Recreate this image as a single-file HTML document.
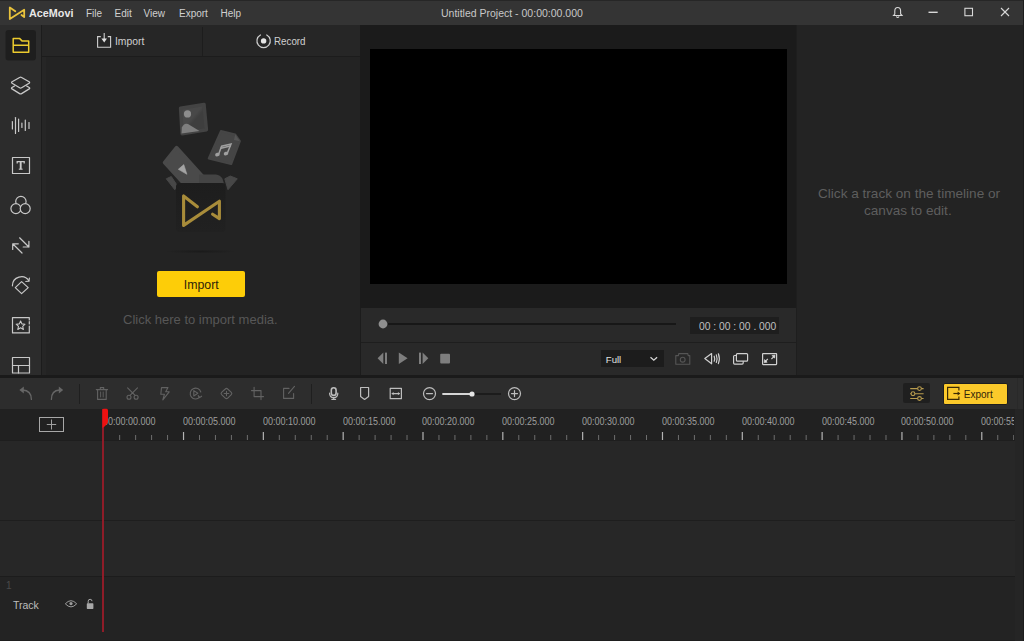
<!DOCTYPE html>
<html><head><meta charset="utf-8">
<style>
*{margin:0;padding:0;box-sizing:border-box}
html,body{width:1024px;height:641px;overflow:hidden;background:#1c1c1c;font-family:"Liberation Sans",sans-serif;color:#ddd}
.a{position:absolute}
svg{position:absolute;overflow:visible}
.t{position:absolute;white-space:nowrap;line-height:1}
</style></head><body>
<!-- title bar -->
<div class="a" style="left:0;top:0;width:1024px;height:25px;background:#343434;border-top:1px solid #262626"></div>
<!-- sidebar -->
<div class="a" style="left:0;top:25px;width:41px;height:351px;background:#2c2c2c"></div>
<div class="a" style="left:40.5px;top:25px;width:1.2px;height:351px;background:#1c1c1c"></div>
<!-- left panel -->
<div class="a" style="left:41.7px;top:25px;width:318.3px;height:351px;background:#232323"></div>
<div class="a" style="left:41.7px;top:25px;width:4.3px;height:351px;background:#262626"></div>
<div class="a" style="left:41.7px;top:25px;width:318.3px;height:32px;background:#262626;border-bottom:1px solid #1c1c1c"></div>
<div class="a" style="left:202px;top:27px;width:1px;height:29px;background:#1d1d1d"></div>
<!-- preview -->
<div class="a" style="left:360px;top:25px;width:436px;height:283px;background:#1b1b1b"></div>
<div class="a" style="left:370px;top:49px;width:417px;height:235px;background:#000"></div>
<!-- controls -->
<div class="a" style="left:360px;top:308px;width:436px;height:68px;background:#292929;border-left:1.3px solid #1c1c1c"></div>
<div class="a" style="left:361px;top:342px;width:435px;height:1px;background:#1e1e1e"></div>
<!-- right panel -->
<div class="a" style="left:796px;top:25px;width:1px;height:352px;background:#1e1e1e"></div>
<div class="a" style="left:797px;top:25px;width:227px;height:352px;background:#232323"></div>
<!-- separator line -->
<div class="a" style="left:0;top:375.3px;width:1024px;height:2.3px;background:#1a1a1a"></div>
<!-- toolbar -->
<div class="a" style="left:0;top:377.6px;width:1024px;height:31px;background:#2d2d2d"></div>
<!-- ruler -->
<div class="a" style="left:0;top:408.8px;width:1024px;height:31.2px;background:#212121"></div>
<!-- tracks -->
<div class="a" style="left:0;top:440px;width:1024px;height:201px;background:#272727;border-top:1px solid #1e1e1e"></div>
<div class="a" style="left:0;top:520px;width:1024px;height:1px;background:#1e1e1e"></div>
<div class="a" style="left:0;top:576px;width:1024px;height:65px;background:#232323;border-top:1px solid #1c1c1c"></div>
<div class="a" style="left:0;top:640px;width:1024px;height:1px;background:#1e1e1e"></div>

<!-- title text -->
<div class="t" style="left:29px;top:8px;font-size:10.8px;font-weight:bold;color:#e8e8e8">AceMovi</div>

<div class="t" style="left:86px;top:9px;font-size:10px;color:#d0d0d0">File</div>
<div class="t" style="left:114.5px;top:9px;font-size:10px;color:#d0d0d0">Edit</div>
<div class="t" style="left:143.5px;top:9px;font-size:10px;color:#d0d0d0">View</div>
<div class="t" style="left:179px;top:9px;font-size:10px;color:#d0d0d0">Export</div>
<div class="t" style="left:220.5px;top:9px;font-size:10px;color:#d0d0d0">Help</div>
<div class="t" style="left:441px;top:8px;font-size:10.5px;color:#c8c8c8">Untitled Project - 00:00:00.000</div>

<!-- header texts -->
<div class="t" style="left:114.5px;top:36px;font-size:11px;color:#d0d0d0;transform:scaleX(0.94);transform-origin:0 0">Import</div>
<div class="t" style="left:273.8px;top:36px;font-size:11px;color:#d0d0d0;transform:scaleX(0.89);transform-origin:0 0">Record</div>

<!-- import button -->
<div class="a" style="left:157px;top:271px;width:88px;height:26px;background:#fdcd08;border-radius:2px"></div>
<div class="t" style="left:183.8px;top:279px;font-size:12.3px;color:#2e2408">Import</div>
<div class="t" style="left:123px;top:313px;font-size:13px;color:#575757">Click here to import media.</div>

<!-- right panel text -->
<div class="t" style="left:818px;top:187px;font-size:13.6px;color:#5e5e5e">Click a track on the timeline or</div>
<div class="t" style="left:864px;top:204px;font-size:13.6px;color:#5e5e5e">canvas to edit.</div>

<!-- timecode -->
<div class="a" style="left:690px;top:317px;width:89px;height:17px;background:#1e1e1e"></div>
<div class="t" style="left:699px;top:321.7px;font-size:10.3px;color:#c0c0c0">00 : 00 : 00 . 000</div>
<!-- full dropdown -->
<div class="a" style="left:601px;top:350px;width:63px;height:17px;background:#1c1c1c"></div>
<div class="t" style="left:605.8px;top:355px;font-size:9.6px;color:#e0e0e0">Full</div>

<!-- export -->
<div class="a" style="left:903px;top:383px;width:27px;height:20px;background:#1f1f1f;border-radius:2px"></div>
<div class="a" style="left:942.5px;top:382.5px;width:65px;height:22px;background:#fbc92a;border-radius:2px;border:0.8px solid #1e1e1e"></div>
<div class="t" style="left:963.8px;top:390px;font-size:10px;color:#30250a">Export</div>

<!-- track header -->
<div class="t" style="left:6px;top:581px;font-size:10px;color:#4a4a4a">1</div>
<div class="t" style="left:13px;top:600px;font-size:10.5px;color:#bdbdbd">Track</div>


<svg width="1024" height="641" viewBox="0 0 1024 641" style="left:0;top:0" fill="none">
<!-- title logo -->
<polyline points="15.3,11.3 9.8,7.4 9.8,19.1 24.2,9.7 24.2,17 21.5,15" stroke="#e8c23c" stroke-width="1.8" stroke-linejoin="round" stroke-linecap="round"/>
<!-- window controls -->
<g stroke="#d8d8d8" stroke-width="1.1">
<path d="M893.5,15.5 L894.8,14 L894.8,11 Q894.8,7.5 897.7,7.5 Q900.6,7.5 900.6,11 L900.6,14 L902,15.5 Z" />
<path d="M896.3,16.5 Q897.7,18.5 899.1,16.5"/>
<line x1="928.5" y1="12.3" x2="937.7" y2="12.3" stroke-width="1.4"/>
<rect x="964.9" y="8.3" width="7.6" height="7.4"/>
<line x1="1001" y1="8" x2="1009" y2="16"/><line x1="1009" y1="8" x2="1001" y2="16"/>
</g>
<!-- sidebar active -->
<rect x="5.5" y="30" width="30.5" height="30.5" rx="3" fill="#1e1e1e"/>
<path d="M13.2,38.4 L19.5,38.4 L22,40.9 L28.7,40.9 L28.7,52.2 L13.2,52.2 Z M13.2,45.3 L28.7,45.3" stroke="#eccb2e" stroke-width="1.5" stroke-linejoin="round"/>
<g stroke="#c8c8c8" stroke-width="1.2" stroke-linejoin="round" stroke-linecap="round">
<!-- layers -->
<path d="M14.5,86 L12,87.5 Q11,88.2 12,88.9 L19.6,93.6 Q20.6,94.2 21.6,93.6 L29.2,88.9 Q30.2,88.2 29.2,87.5 L26.7,86" stroke-width="1.3"/>
<path d="M19.6,77.5 Q20.6,76.9 21.6,77.5 L29.1,81.8 Q30.1,82.5 29.1,83.2 L21.6,87.8 Q20.6,88.4 19.6,87.8 L12.1,83.2 Q11.1,82.5 12.1,81.8 Z" fill="#2c2c2c" stroke-width="1.3"/>
<!-- audio -->
<line x1="12.4" y1="121.5" x2="12.4" y2="129"/>
<line x1="15.5" y1="117.5" x2="15.5" y2="133.5"/>
<line x1="18.6" y1="119" x2="18.6" y2="131.5"/>
<line x1="21.9" y1="123" x2="21.9" y2="127.5"/>
<line x1="25.3" y1="120" x2="25.3" y2="130.5"/>
<line x1="29" y1="122.5" x2="29" y2="128.5"/>
<!-- T box -->
<rect x="12.5" y="157.5" width="17" height="16"/>
<path d="M17.2,163.6 L17.2,161.7 L24.2,161.7 L24.2,163.6" stroke-width="1.3" stroke-linecap="butt" stroke-linejoin="miter"/>
<path d="M20.7,161.7 L20.7,169" stroke-width="1.9" stroke-linecap="butt"/>
<path d="M18.8,169.2 L22.6,169.2" stroke-width="1.1" stroke-linecap="butt"/>
<!-- circles -->
<circle cx="20.9" cy="201.6" r="5.2"/>
<circle cx="15.9" cy="208.6" r="5" fill="#2c2c2c"/>
<circle cx="25.2" cy="208.6" r="5" fill="#2c2c2c"/>
<!-- transition arrows -->
<path d="M19.6,237.8 L28.9,247 M23.2,247 L28.9,247 L28.9,241.3"/>
<path d="M22,253 L12.7,243.8 M18.3,243.8 L12.7,243.8 L12.7,249.4"/>
<!-- rotate -->
<path d="M21.6,281.6 L28.2,287.6 L21.6,293.6 L15.3,287.6 Z"/>
<path d="M12.4,285.8 A9,9 0 0 1 29,281"/>
<path d="M29.4,278.2 L28.9,281.1 L25.8,281.5"/>
<!-- star box -->
<path d="M29.3,320 L29.3,317.6 L12.5,317.6 L12.5,332.9 L29.3,332.9 L29.3,326 M29.3,321.7 L29.3,324"/>
<path d="M20.6,321 L21.9,323.9 L25,324.2 L22.7,326.3 L23.4,329.4 L20.6,327.8 L17.8,329.4 L18.5,326.3 L16.2,324.2 L19.3,323.9 Z" stroke-width="1.1"/>
<!-- layout -->
<rect x="12.5" y="357.5" width="17" height="15.5"/>
<path d="M12.5,365.5 L29.5,365.5 M18.5,365.5 L18.5,373"/>
</g>
</svg>

<svg width="1024" height="641" viewBox="0 0 1024 641" style="left:0;top:0" fill="none">
<!-- header icons -->
<g stroke="#cfcfcf" stroke-width="1.1">
<path d="M100.8,36.6 L97.6,36.6 L97.6,47.3 L110.6,47.3 L110.6,36.6 L107.8,36.6"/>
<path d="M104.2,33 L104.2,40"/>
</g>
<path d="M101.4,38.6 L104.2,42.4 L107,38.6 Z" fill="#e0e0e0"/>
<path d="M266.75,34.98 A6.7,6.7 0 1 1 260.45,34.98" stroke="#cfcfcf" stroke-width="1.2" stroke-linecap="round"/>
<circle cx="263.6" cy="40.9" r="2.7" fill="#e6e6e6"/>
<!-- illustration -->
<defs><radialGradient id="sh" cx="0.5" cy="0.5" r="0.5"><stop offset="0" stop-color="#161616" stop-opacity="0.9"/><stop offset="1" stop-color="#161616" stop-opacity="0"/></radialGradient></defs>
<ellipse cx="201" cy="251.5" rx="36" ry="2" fill="url(#sh)" opacity="0.7"/>
<!-- image card -->
<defs><linearGradient id="ic" x1="0" y1="0" x2="1" y2="1"><stop offset="0.45" stop-color="#484848"/><stop offset="0.55" stop-color="#3e3e3e"/></linearGradient></defs><path d="M180.6,108.3 L204,104.4 L206.4,129.7 L182.1,133.8 Z" fill="url(#ic)" stroke="#434343" stroke-width="3.5" stroke-linejoin="round"/>
<circle cx="187.5" cy="113.9" r="3.6" fill="#8c8c8c"/>
<path d="M181.5,133.5 L181.8,127.5 Q184,122.5 188,124 L199.5,131 Z" fill="#7e7e7e"/>
<!-- music card -->
<path d="M221,131.1 L235.2,134.6 L239.8,141.2 L231.1,164 L208.8,158.5 Z" fill="#454545" stroke="#454545" stroke-width="2.2" stroke-linejoin="round"/>
<path d="M235.2,134.6 L239.8,141.2 L234,140 Z" fill="#555"/>
<g stroke="#a0a0a0" stroke-width="1.5" fill="none" stroke-linecap="round">
<path d="M218.8,153.8 L221.6,146.2 L231,144 L227.4,153"/>
<path d="M221,148.2 L230.2,146"/>
</g>
<ellipse cx="217.4" cy="154.6" rx="2.3" ry="1.8" fill="#a0a0a0" transform="rotate(-15 217.4 154.6)"/>
<ellipse cx="226" cy="153.6" rx="2.3" ry="1.8" fill="#a0a0a0" transform="rotate(-15 226 153.6)"/>
<!-- video card -->
<path d="M164.5,162.5 L176.5,147.5 L209,183.4 L183.5,183.4 Z" fill="#4a4a4a" stroke="#4a4a4a" stroke-width="3.5" stroke-linejoin="round"/>
<path d="M178.3,169.3 L183.8,164.6 L186.9,174.3 Z" fill="#a4a4a4" stroke="#a4a4a4" stroke-width="0.6" stroke-linejoin="round"/>
<!-- lid / flaps -->
<path d="M199,174.5 L216,174.5 Q220,175 222.5,178.7 L224,183.5 L199,183.5 Z" fill="#444"/>
<path d="M166.3,178.8 L171.3,176.5 L177.5,186 L174.8,189.7 Z" fill="#474747" stroke="#474747" stroke-width="1" stroke-linejoin="round"/>
<path d="M224.8,178.8 L230.3,176 L237.3,178.8 L228,189.7 Z" fill="#474747" stroke="#474747" stroke-width="1" stroke-linejoin="round"/>
<!-- box body -->
<defs><linearGradient id="bx" x1="0" y1="0" x2="0" y2="1"><stop offset="0" stop-color="#1d1d1d"/><stop offset="1" stop-color="#212121"/></linearGradient></defs><rect x="176" y="183" width="49.5" height="49" rx="3.5" fill="url(#bx)"/>
<polyline points="197.4,206.8 183.6,196 183.6,225.4 219.4,201.2 219.4,218.6 212.6,214.2" stroke="#a88c3a" stroke-width="3.1" stroke-linejoin="round" stroke-linecap="round"/>
<!-- scrub -->
<line x1="388" y1="324" x2="676" y2="324" stroke="#171717" stroke-width="2.2"/>
<circle cx="383" cy="324" r="4.4" fill="#8e8e8e"/>
<!-- playback -->
<g fill="#7e7e7e">
<path d="M377.6,358.3 L383.3,352.6 L383.3,364 Z"/><rect x="385" y="352.6" width="2" height="11.4"/>
<path d="M398.8,352.6 L407.6,358.3 L398.8,364 Z"/>
<rect x="419" y="352.6" width="2" height="11.4"/><path d="M422.6,352.6 L428.3,358.3 L422.6,364 Z"/>
<rect x="440.2" y="353.8" width="9.8" height="9.6" rx="1"/>
</g>
<!-- dropdown chevron -->
<path d="M650.5,357.2 L653.8,360.3 L657.1,357.2" stroke="#d8d8d8" stroke-width="1.2"/>
<!-- camera -->
<g stroke="#555" stroke-width="1.1" stroke-linejoin="round">
<path d="M675.8,355.6 L678.4,355.6 L678.8,353.6 L687.8,353.6 L688.2,355.6 L689.8,355.6 L689.8,364.2 L675.8,364.2 Z"/>
<circle cx="682.7" cy="359.7" r="2.4"/>
</g>
<!-- speaker -->
<g stroke="#d0d0d0" stroke-width="1.2" stroke-linejoin="round" stroke-linecap="round">
<path d="M704.8,358.6 L711.6,353.6 L711.6,363.8 Z"/>
<path d="M714.2,356.2 Q715.2,358.7 714.2,361.2"/>
<path d="M716.3,354.9 Q717.8,358.7 716.3,362.5"/>
<path d="M718.4,353.8 Q720.3,358.7 718.4,363.6"/>
</g>
<!-- pip -->
<g stroke="#d0d0d0" stroke-width="1.2">
<rect x="733.6" y="355.5" width="9.6" height="8.6" rx="1"/>
<rect x="736.4" y="353.6" width="11.2" height="7.6" rx="1" fill="#292929"/>
</g>
<!-- fullscreen -->
<g stroke="#d0d0d0" stroke-width="1.2">
<rect x="762.6" y="353.6" width="14" height="11" rx="0.5"/>
<path d="M767.8,359 L765.6,361.2 M771.4,359 L773.6,356.8" stroke-width="1.1"/>
</g>
<path d="M764.2,362.6 L764.6,359.6 L767.2,362.2 Z M775,355.2 L774.6,358.2 L772,355.6 Z" fill="#e0e0e0" stroke="#e0e0e0" stroke-width="0.6" stroke-linejoin="round"/>
</svg>

<svg width="1024" height="641" viewBox="0 0 1024 641" style="left:0;top:0" fill="none">
<!-- toolbar disabled icons -->
<g stroke="#666" stroke-width="1.3" stroke-linecap="round" stroke-linejoin="round">
<path d="M22.5,390 Q31.4,390.5 31.4,399.4"/>
<path d="M59.5,390 Q51.4,390.5 51.4,399.4"/>
</g>
<path d="M19.4,390 L23.8,386.6 L23.8,393.4 Z" fill="#666"/>
<path d="M63.2,390 L58.8,386.6 L58.8,393.4 Z" fill="#666"/>
<line x1="79.5" y1="384" x2="79.5" y2="404" stroke="#1f1f1f" stroke-width="1"/>
<line x1="311.5" y1="384" x2="311.5" y2="404" stroke="#1f1f1f" stroke-width="1"/>
<g stroke="#626262" stroke-width="1.1" stroke-linejoin="round" stroke-linecap="round">
<!-- trash -->
<path d="M96.3,389.6 L107.6,389.6 M100.3,389.4 L100.3,387.6 L103.7,387.6 L103.7,389.4"/>
<path d="M97.6,389.8 L97.6,399.4 L106.2,399.4 L106.2,389.8"/>
<path d="M100.6,392 L100.6,397 M103.2,392 L103.2,397" stroke-width="0.9"/>
<!-- scissors -->
<circle cx="129" cy="397.2" r="2"/><circle cx="136.1" cy="397.2" r="2"/>
<path d="M130,395.3 L137.5,387.8 M135.1,395.3 L127.6,387.8"/>
<!-- lightning -->
<path d="M161.5,387.6 L168,387.6 L165.7,391.8 L169.2,391.8 L162.8,399.8 L164.4,394.3 L160.8,394.3 Z"/>
<!-- speed -->
<path d="M199.6,397.2 A5.4,5.4 0 1 1 200.8,392"/>
<path d="M201.6,396.2 L199.6,397.6 L198.2,395.6"/>
<path d="M193.8,390.6 L197.8,393.3 L193.8,396 Z"/>
<!-- keyframe -->
<path d="M225.3,389 Q226.5,387.8 227.7,389 L231.3,392.4 Q232.4,393.5 231.3,394.6 L227.7,398.1 Q226.5,399.3 225.3,398.1 L221.6,394.6 Q220.5,393.5 221.6,392.4 Z"/>
<path d="M226.5,391.2 L226.5,395.8 M224.2,393.5 L228.8,393.5"/>
<!-- crop -->
<path d="M254.1,387.2 L254.1,396.6 L263.5,396.6 M251.5,390.6 L261,390.6 L261,399.6"/>
<!-- edit -->
<path d="M289,388.4 L283.6,388.4 L283.6,398.4 L293.6,398.4 L293.6,393.5"/>
<path d="M288.5,393.4 L294.5,386.4"/>
</g>
<!-- enabled icons -->
<g stroke="#bdbdbd" stroke-width="1.2" stroke-linejoin="round" stroke-linecap="round">
<rect x="331.3" y="387.8" width="4.8" height="7.6" rx="2.4" stroke-width="1.6"/>
<path d="M329.6,393.2 Q329.6,397.6 333.7,397.6 Q337.8,397.6 337.8,393.2"/>
<path d="M333.7,397.6 L333.7,399 M331.8,399.3 L335.6,399.3"/>
<path d="M360.6,387.5 L368.6,387.5 L368.6,396.4 L364.6,399.4 L360.6,396.4 Z"/>
<rect x="390.2" y="388.3" width="11.2" height="10.4"/>
<path d="M392.3,393.6 L399.3,393.6"/>
<circle cx="429.5" cy="393.6" r="6"/>
<path d="M426.5,393.6 L432.5,393.6"/>
<circle cx="514.5" cy="393.6" r="6"/>
<path d="M511.5,393.6 L517.5,393.6 M514.5,390.6 L514.5,396.6"/>
</g>
<path d="M391.5,393.6 L393.6,392 L393.6,395.2 Z M400,393.6 L397.9,392 L397.9,395.2 Z" fill="#bdbdbd"/>
<!-- zoom slider -->
<line x1="443" y1="394" x2="472" y2="394" stroke="#d6d6d6" stroke-width="1.8" stroke-linecap="round"/>
<line x1="472" y1="394" x2="501" y2="394" stroke="#191919" stroke-width="1.6"/>
<circle cx="472" cy="394" r="2.6" fill="#e6e6e6"/>
<!-- sliders icon -->
<g stroke="#b89c4e" stroke-width="1.1">
<path d="M910.2,388.6 L917.6,388.6 M921.4,388.6 L923.6,388.6"/>
<path d="M910.2,393.7 L911.1,393.7 M914.9,393.7 L923.6,393.7"/>
<path d="M910.2,398.5 L917.6,398.5 M921.4,398.5 L923.6,398.5"/>
<circle cx="919.5" cy="388.6" r="1.9"/><circle cx="913" cy="393.7" r="1.9"/><circle cx="919.5" cy="398.5" r="1.9"/>
</g>
<!-- export icon -->
<g stroke="#3a2a05" stroke-width="1.2">
<path d="M958.9,390.6 L958.9,387.4 L947.6,387.4 L947.6,399.4 L958.9,399.4 L958.9,396.4"/>
<path d="M953.4,393.5 L958,393.5"/>
</g>
<path d="M960.4,393.5 L957.6,391.5 L957.6,395.5 Z" fill="#3a2a05"/>
<!-- + box -->
<rect x="39.5" y="417.5" width="24" height="14" stroke="#a8a8a8" stroke-width="1"/>
<path d="M51.5,419.5 L51.5,429.5 M46.8,424.5 L56.2,424.5" stroke="#a0a0a0" stroke-width="1"/>
<!-- eye -->
<path d="M65.3,603.8 Q71,597.6 76.7,603.8 Q71,610 65.3,603.8 Z" stroke="#9c9c9c" stroke-width="1"/>
<circle cx="71" cy="603.6" r="1.6" fill="#9c9c9c"/>
<!-- lock -->
<rect x="86.8" y="603.3" width="6.6" height="5.6" rx="0.6" fill="#a8a8a8"/>
<path d="M88.2,603.5 L88.2,601.2 Q88.2,599.3 90.1,599.3 Q92,599.3 92,601.2" stroke="#a8a8a8" stroke-width="1"/>
</svg>
<div class="a" style="left:0;top:409px;width:1014px;height:31px;overflow:hidden"><div class="a" style="left:0;top:-409px;width:1024px;height:641px"><div class="t" style="left:103.2px;top:417px;font-size:10px;color:#9e9e9e;transform:scaleX(0.9);transform-origin:0 0">00:00:00.000</div>
<div class="t" style="left:183.02px;top:417px;font-size:10px;color:#9e9e9e;transform:scaleX(0.9);transform-origin:0 0">00:00:05.000</div>
<div class="t" style="left:262.84px;top:417px;font-size:10px;color:#9e9e9e;transform:scaleX(0.9);transform-origin:0 0">00:00:10.000</div>
<div class="t" style="left:342.66px;top:417px;font-size:10px;color:#9e9e9e;transform:scaleX(0.9);transform-origin:0 0">00:00:15.000</div>
<div class="t" style="left:422.48px;top:417px;font-size:10px;color:#9e9e9e;transform:scaleX(0.9);transform-origin:0 0">00:00:20.000</div>
<div class="t" style="left:502.3px;top:417px;font-size:10px;color:#9e9e9e;transform:scaleX(0.9);transform-origin:0 0">00:00:25.000</div>
<div class="t" style="left:582.12px;top:417px;font-size:10px;color:#9e9e9e;transform:scaleX(0.9);transform-origin:0 0">00:00:30.000</div>
<div class="t" style="left:661.94px;top:417px;font-size:10px;color:#9e9e9e;transform:scaleX(0.9);transform-origin:0 0">00:00:35.000</div>
<div class="t" style="left:741.76px;top:417px;font-size:10px;color:#9e9e9e;transform:scaleX(0.9);transform-origin:0 0">00:00:40.000</div>
<div class="t" style="left:821.58px;top:417px;font-size:10px;color:#9e9e9e;transform:scaleX(0.9);transform-origin:0 0">00:00:45.000</div>
<div class="t" style="left:901.4px;top:417px;font-size:10px;color:#9e9e9e;transform:scaleX(0.9);transform-origin:0 0">00:00:50.000</div>
<div class="t" style="left:981.22px;top:417px;font-size:10px;color:#9e9e9e;transform:scaleX(0.9);transform-origin:0 0">00:00:55.000</div>
<svg width="1024" height="641" viewBox="0 0 1024 641" style="left:0;top:0" fill="none">

<line x1="119.67" y1="435" x2="119.67" y2="440" stroke="#6e6e6e" stroke-width="1"/>
<line x1="135.63" y1="435" x2="135.63" y2="440" stroke="#6e6e6e" stroke-width="1"/>
<line x1="151.59" y1="435" x2="151.59" y2="440" stroke="#6e6e6e" stroke-width="1"/>
<line x1="167.56" y1="435" x2="167.56" y2="440" stroke="#6e6e6e" stroke-width="1"/>
<line x1="183.53" y1="432" x2="183.53" y2="440" stroke="#b4b4b4" stroke-width="1.2"/>
<line x1="199.49" y1="435" x2="199.49" y2="440" stroke="#6e6e6e" stroke-width="1"/>
<line x1="215.45" y1="435" x2="215.45" y2="440" stroke="#6e6e6e" stroke-width="1"/>
<line x1="231.42" y1="435" x2="231.42" y2="440" stroke="#6e6e6e" stroke-width="1"/>
<line x1="247.38" y1="435" x2="247.38" y2="440" stroke="#6e6e6e" stroke-width="1"/>
<line x1="263.35" y1="432" x2="263.35" y2="440" stroke="#b4b4b4" stroke-width="1.2"/>
<line x1="279.31" y1="435" x2="279.31" y2="440" stroke="#6e6e6e" stroke-width="1"/>
<line x1="295.28" y1="435" x2="295.28" y2="440" stroke="#6e6e6e" stroke-width="1"/>
<line x1="311.25" y1="435" x2="311.25" y2="440" stroke="#6e6e6e" stroke-width="1"/>
<line x1="327.21" y1="435" x2="327.21" y2="440" stroke="#6e6e6e" stroke-width="1"/>
<line x1="343.18" y1="432" x2="343.18" y2="440" stroke="#b4b4b4" stroke-width="1.2"/>
<line x1="359.14" y1="435" x2="359.14" y2="440" stroke="#6e6e6e" stroke-width="1"/>
<line x1="375.1" y1="435" x2="375.1" y2="440" stroke="#6e6e6e" stroke-width="1"/>
<line x1="391.07" y1="435" x2="391.07" y2="440" stroke="#6e6e6e" stroke-width="1"/>
<line x1="407.03" y1="435" x2="407.03" y2="440" stroke="#6e6e6e" stroke-width="1"/>
<line x1="423.0" y1="432" x2="423.0" y2="440" stroke="#b4b4b4" stroke-width="1.2"/>
<line x1="438.96" y1="435" x2="438.96" y2="440" stroke="#6e6e6e" stroke-width="1"/>
<line x1="454.93" y1="435" x2="454.93" y2="440" stroke="#6e6e6e" stroke-width="1"/>
<line x1="470.89" y1="435" x2="470.89" y2="440" stroke="#6e6e6e" stroke-width="1"/>
<line x1="486.86" y1="435" x2="486.86" y2="440" stroke="#6e6e6e" stroke-width="1"/>
<line x1="502.82" y1="432" x2="502.82" y2="440" stroke="#b4b4b4" stroke-width="1.2"/>
<line x1="518.79" y1="435" x2="518.79" y2="440" stroke="#6e6e6e" stroke-width="1"/>
<line x1="534.75" y1="435" x2="534.75" y2="440" stroke="#6e6e6e" stroke-width="1"/>
<line x1="550.72" y1="435" x2="550.72" y2="440" stroke="#6e6e6e" stroke-width="1"/>
<line x1="566.69" y1="435" x2="566.69" y2="440" stroke="#6e6e6e" stroke-width="1"/>
<line x1="582.65" y1="432" x2="582.65" y2="440" stroke="#b4b4b4" stroke-width="1.2"/>
<line x1="598.62" y1="435" x2="598.62" y2="440" stroke="#6e6e6e" stroke-width="1"/>
<line x1="614.58" y1="435" x2="614.58" y2="440" stroke="#6e6e6e" stroke-width="1"/>
<line x1="630.55" y1="435" x2="630.55" y2="440" stroke="#6e6e6e" stroke-width="1"/>
<line x1="646.51" y1="435" x2="646.51" y2="440" stroke="#6e6e6e" stroke-width="1"/>
<line x1="662.48" y1="432" x2="662.48" y2="440" stroke="#b4b4b4" stroke-width="1.2"/>
<line x1="678.44" y1="435" x2="678.44" y2="440" stroke="#6e6e6e" stroke-width="1"/>
<line x1="694.41" y1="435" x2="694.41" y2="440" stroke="#6e6e6e" stroke-width="1"/>
<line x1="710.37" y1="435" x2="710.37" y2="440" stroke="#6e6e6e" stroke-width="1"/>
<line x1="726.34" y1="435" x2="726.34" y2="440" stroke="#6e6e6e" stroke-width="1"/>
<line x1="742.3" y1="432" x2="742.3" y2="440" stroke="#b4b4b4" stroke-width="1.2"/>
<line x1="758.26" y1="435" x2="758.26" y2="440" stroke="#6e6e6e" stroke-width="1"/>
<line x1="774.23" y1="435" x2="774.23" y2="440" stroke="#6e6e6e" stroke-width="1"/>
<line x1="790.2" y1="435" x2="790.2" y2="440" stroke="#6e6e6e" stroke-width="1"/>
<line x1="806.16" y1="435" x2="806.16" y2="440" stroke="#6e6e6e" stroke-width="1"/>
<line x1="822.12" y1="432" x2="822.12" y2="440" stroke="#b4b4b4" stroke-width="1.2"/>
<line x1="838.09" y1="435" x2="838.09" y2="440" stroke="#6e6e6e" stroke-width="1"/>
<line x1="854.06" y1="435" x2="854.06" y2="440" stroke="#6e6e6e" stroke-width="1"/>
<line x1="870.02" y1="435" x2="870.02" y2="440" stroke="#6e6e6e" stroke-width="1"/>
<line x1="885.99" y1="435" x2="885.99" y2="440" stroke="#6e6e6e" stroke-width="1"/>
<line x1="901.95" y1="432" x2="901.95" y2="440" stroke="#b4b4b4" stroke-width="1.2"/>
<line x1="917.92" y1="435" x2="917.92" y2="440" stroke="#6e6e6e" stroke-width="1"/>
<line x1="933.88" y1="435" x2="933.88" y2="440" stroke="#6e6e6e" stroke-width="1"/>
<line x1="949.85" y1="435" x2="949.85" y2="440" stroke="#6e6e6e" stroke-width="1"/>
<line x1="965.81" y1="435" x2="965.81" y2="440" stroke="#6e6e6e" stroke-width="1"/>
<line x1="981.78" y1="432" x2="981.78" y2="440" stroke="#b4b4b4" stroke-width="1.2"/>
<line x1="997.74" y1="435" x2="997.74" y2="440" stroke="#6e6e6e" stroke-width="1"/>
<line x1="1013.71" y1="435" x2="1013.71" y2="440" stroke="#6e6e6e" stroke-width="1"/>
</svg></div></div>
<div class="a" style="left:1015px;top:409px;width:9px;height:232px;background:#252525"></div>
<div class="a" style="left:1017px;top:377.6px;width:1px;height:31px;background:#292929"></div>
<!-- playhead -->
<div class="a" style="left:102px;top:409px;width:2px;height:223px;background:#8f1c28"></div>
<svg width="1024" height="641" viewBox="0 0 1024 641" style="left:0;top:0"><path d="M102.4,410 Q102.4,408.8 104,408.8 L106.5,408.8 Q108,408.8 108,410.5 L108,421 Q108,423.5 104,427 L102.4,428 Z" fill="#ee1111"/></svg>
<div class="a" style="left:1023px;top:0;width:1px;height:641px;background:#1c1c1c"></div>
</body></html>
